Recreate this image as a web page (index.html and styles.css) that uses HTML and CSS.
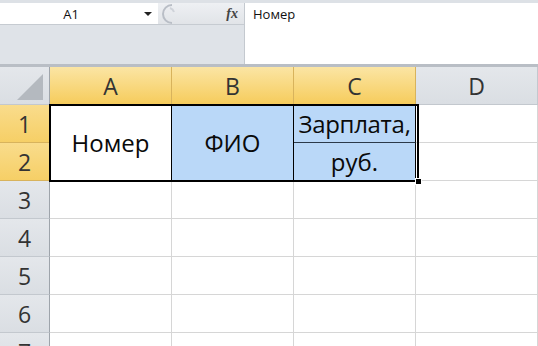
FILE: index.html
```html
<!DOCTYPE html>
<html lang="ru">
<head>
    <meta charset="UTF-8">
    <title>Лист1</title>
    <link rel="stylesheet" href="styles.css">
</head>
<body>
    <!-- Строка формул -->
    <div class="toolbar">
        <div class="tools-left">
            <div class="namebox-row">
                <div class="namebox">
                    <span class="cell-ref">A1</span>
                    <span class="arrow"></span>
                </div>
                <div class="buttons">
                    <svg class="grip" width="16" height="20" viewBox="0 0 16 20">
                        <path d="M12 1 A9 9 0 0 0 12 19" fill="none" stroke="#b9bec6" stroke-width="2"/>
                        <path d="M10 4 A6 6 0 0 1 14 8" fill="none" stroke="#cfd3d9" stroke-width="2"/>
                    </svg>
                    <span class="fx">fx</span>
                </div>
            </div>
            <div class="tools-space"></div>
        </div>
        <div class="formula">Номер</div>
    </div>

    <!-- Лист -->
    <div class="sheet">
        <div class="corner">
            <svg width="30" height="30" viewBox="0 0 30 30">
                <polygon points="28,4 28,30 2,30" fill="#b4b9bf"/>
            </svg>
        </div>
        <div class="col-head active">A</div>
        <div class="col-head active">B</div>
        <div class="col-head active">C</div>
        <div class="col-head">D</div>

        <div class="row-head active">1</div>
        <div class="cell merged a1">Номер</div>
        <div class="cell merged b1 sel">ФИО</div>
        <div class="cell c1 sel">Зарплата,</div>
        <div class="cell"></div>

        <div class="row-head active">2</div>
        <div class="cell c2 sel">руб.</div>
        <div class="cell"></div>

        <div class="row-head">3</div>
        <div class="cell"></div><div class="cell"></div><div class="cell"></div><div class="cell"></div>
        <div class="row-head">4</div>
        <div class="cell"></div><div class="cell"></div><div class="cell"></div><div class="cell"></div>
        <div class="row-head">5</div>
        <div class="cell"></div><div class="cell"></div><div class="cell"></div><div class="cell"></div>
        <div class="row-head">6</div>
        <div class="cell"></div><div class="cell"></div><div class="cell"></div><div class="cell"></div>
        <div class="row-head">7</div>
        <div class="cell"></div><div class="cell"></div><div class="cell"></div><div class="cell"></div>

        <div class="selection"><span class="handle"></span></div>
    </div>
</body>
</html>
```

FILE: styles.css
```css
/* Общие стили */
body {
    margin: 0;
    width: 538px;
    height: 346px;
    overflow: hidden;
    font-family: 'Open Sans', 'Liberation Sans', sans-serif;
    background-color: #fff;
    color: #111;
}

/* Строка формул */
.toolbar {
    display: flex;
    height: 61px;
    border-top: 3px solid #dde1e6;
    border-bottom: 3px solid #b9bec5;
    background-color: #fff;
}

.tools-left {
    width: 244px;
    display: flex;
    flex-direction: column;
    border-right: 1px solid #c4c9cf;
}

.namebox-row {
    height: 21px;
    display: flex;
    border-bottom: 1px solid #c6cbd1;
}

.namebox {
    width: 158px;
    position: relative;
    display: flex;
    align-items: center;
    justify-content: center;
    background-color: #fff;
}

.cell-ref {
    font-size: 13px;
    margin-left: -16px;
}

.arrow {
    position: absolute;
    right: 6px;
    top: 9px;
    border-left: 4px solid transparent;
    border-right: 4px solid transparent;
    border-top: 4px solid #222;
}

.buttons {
    flex: 1;
    display: flex;
    align-items: center;
    justify-content: space-between;
    padding: 0 6px 0 2px;
    background: linear-gradient(#eef0f3, #e1e4e8);
}

.fx {
    font-family: 'Liberation Serif', serif;
    font-style: italic;
    font-weight: bold;
    font-size: 14px;
    color: #444;
}

.tools-space {
    flex: 1;
    background-color: #dfe3e8;
}

.formula {
    flex: 1;
    padding: 2px 8px;
    font-size: 13px;
}

/* Сетка листа */
.sheet {
    position: relative;
    display: grid;
    grid-template-columns: 50px repeat(4, 122px);
    grid-template-rows: repeat(8, 38px);
}

.corner, .col-head, .row-head {
    box-sizing: border-box;
    display: flex;
    align-items: center;
    justify-content: center;
    font-size: 23px;
    color: #333;
    background: linear-gradient(#e4e7eb, #dadee3);
    border-right: 1px solid #c3c8ce;
    border-bottom: 1px solid #c3c8ce;
}

.corner {
    align-items: flex-end;
    justify-content: flex-end;
    padding: 0 4px 4px 0;
    border-right-color: #9ea4ab;
}

.row-head {
    border-right: 1px solid #9ea4ab;
}

.col-head.active {
    background: linear-gradient(#fbe5a4, #f6cc5c);
    border-right-color: #d8b35c;
    border-bottom-color: #c9a24c;
}

.row-head.active {
    background: linear-gradient(#f9dc8c, #f6cf66);
    border-bottom-color: #d8b35c;
    border-right-color: #c9a24c;
}

.cell {
    box-sizing: border-box;
    display: flex;
    align-items: center;
    justify-content: center;
    font-size: 24px;
    color: #0a0a0a;
    border-right: 1px solid #d6d6d6;
    border-bottom: 1px solid #d6d6d6;
}

.merged {
    grid-row: span 2;
}

.sel {
    background-color: #bad8f8;
}

.a1, .b1 {
    border-right-color: #000;
    border-bottom-color: #000;
}

.c1 {
    border-bottom-color: #2b3a4a;
    border-right-color: #000;
    letter-spacing: -0.3px;
}

.c2 {
    border-right-color: #000;
    border-bottom-color: #000;
}

/* Рамка выделения */
.selection {
    position: absolute;
    left: 49px;
    top: 37px;
    width: 366px;
    height: 74px;
    border: 2px solid #000;
    pointer-events: none;
}

.selection .handle {
    position: absolute;
    right: -5px;
    bottom: -5px;
    width: 5px;
    height: 5px;
    background-color: #000;
    border: 1px solid #fff;
}
```
